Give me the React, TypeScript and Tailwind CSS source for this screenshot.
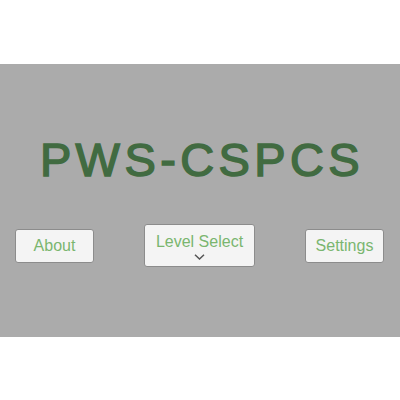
import React from "react";

// main menu buttons shown under the game title
const menuButtons = [
  { id: 1, name: "About" },
  { id: 2, name: "Level Select", dropdown: true },
  { id: 3, name: "Settings" },
];

const Chevron = () => (
  <svg width="11" height="6" viewBox="0 0 11 6" fill="none">
    <path d="M1 0.8 L5.5 5 L10 0.8" stroke="#555555" strokeWidth="1.5" />
  </svg>
);

const App = () => {
  return (
    <div
      className="w-[400px] h-[400px] bg-white pt-[64px]"
      style={{ fontFamily: '"Liberation Sans", Arial, sans-serif' }}
    >
      <div className="h-[273px] bg-[#ababab] flex flex-col">
        <h1 className="mt-[72px] pl-[4px] text-center text-[47px] leading-[47px] tracking-[4.4px] text-[#416b41] font-normal [-webkit-text-stroke:1.5px_#416b41]">
          PWS-CSPCS
        </h1>
        <div className="mt-[41px] flex items-center justify-between pl-[15px] pr-[16px]">
          {menuButtons.map((item) =>
            item.dropdown ? (
              <button
                key={item.id}
                className="w-[111px] h-[43px] bg-[#f4f4f4] border border-[#8c8c8c] rounded-[3px] flex flex-col items-center pt-[8px] text-[16px] leading-[18px] text-[#7ab66f]"
              >
                {item.name}
                <span className="mt-[3px] flex">
                  <Chevron />
                </span>
              </button>
            ) : (
              <button
                key={item.id}
                className="w-[79px] h-[34px] bg-[#f4f4f4] border border-[#8c8c8c] rounded-[3px] flex items-center justify-center text-[16px] text-[#7ab66f]"
              >
                {item.name}
              </button>
            )
          )}
        </div>
      </div>
    </div>
  );
};

export default App;
